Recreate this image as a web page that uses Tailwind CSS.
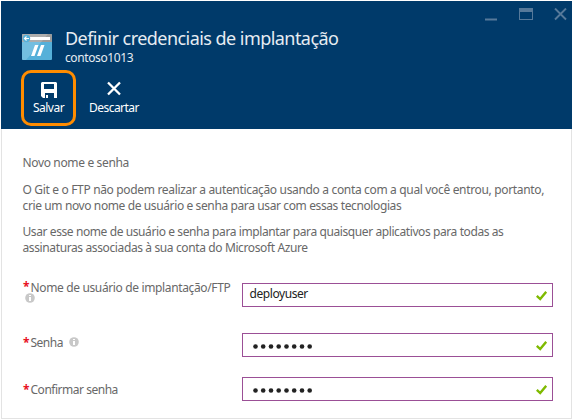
<!DOCTYPE html>
<html lang="pt-BR">
<head>
<meta charset="utf-8">
<title>Definir credenciais de implantação</title>
<script src="https://cdn.jsdelivr.net/npm/@tailwindcss/browser@4"></script>
</head>
<body class="bg-white font-['Noto_Sans',sans-serif] text-[12px] leading-4 text-[#686868] overflow-hidden">
<main class="mt-px ml-px w-[571px] h-[418px] border-r border-b border-[#e3e3e3] border-l flex flex-col">
  <header class="relative -mx-px h-32 shrink-0 bg-[#003a6a] text-[#e6ecf2]">
    <nav class="absolute right-[5px] top-[7px] flex">
      <svg class="w-[82px] h-[13px]" viewBox="0 0 82 13" fill="#56799a">
        <path d="M0 10.500h12v2H0z"/>
        <path d="M34 0h14v12H34zM35 4v7h12V4z" fill-rule="evenodd"/>
        <path d="M70 .5l11 11M81 .5l-11 11" stroke="#56799a" stroke-width="1.900"/>
      </svg>
    </nav>
    <div class="flex pt-[25px] pl-[21px]">
      <svg class="mt-[8px] w-[30px] h-[26px] shrink-0" viewBox="0 0 30 26">
        <rect width="30" height="26" rx="1" fill="#55b0d9"/>
        <path d="M0 8V1q0-1 1-1h28q1 0 1 1v7z" fill="#9b9b9b"/>
        <path d="M0 26V1q0-1 1-1h25L4 26z" fill="#fff" fill-opacity=".18"/>
        <rect x="8" y="3" width="20" height="3" fill="#fff"/>
        <circle cx="4.500" cy="4.500" r="3.700" fill="#55b0d9"/>
        <path d="M7 4.500H2.500M4.500 2.500l-2 2 2 2" stroke="#fff" stroke-width="1.100" fill="none"/>
        <path d="M13 11h3.500l-4 11H9zM19 11h3.500l-4 11H15z" fill="#fff"/>
      </svg>
      <div class="ml-[13px]">
        <h1 class="text-[18px] leading-6 whitespace-nowrap font-normal tracking-[-0.550px]">Definir credenciais de implantação</h1>
        <p class="text-[12px] leading-4 tracking-[-0.400px]">contoso1013</p>
      </div>
    </div>
    <div class="flex mt-[4px] pl-[20px] text-white">
      <button class="w-[55px] h-14 border-3 border-[#ff8c00] rounded-[10px] flex flex-col items-center pt-[9px]">
        <svg class="w-4 h-4 shrink-0" viewBox="0 0 16 16" fill="#fff" fill-rule="evenodd"><path d="M1 0h14l1 1v15h-3v-5H4v5H2l-2-2V1zM3 2v5h10V2zM5 13h2v3H5z"/></svg>
        <span class="mt-[2px] leading-4 tracking-[-0.500px]">Salvar</span>
      </button>
      <button class="ml-[9px] w-[58px] h-14 flex flex-col items-center pt-[11px]">
        <svg class="w-4 h-4 shrink-0" viewBox="0 0 16 16" fill="none" stroke="#fff" stroke-width="2.300"><path d="M2 1.500l12 12M14 1.500l-12 12"/></svg>
        <span class="mt-[3px] leading-4 tracking-[-0.550px]">Descartar</span>
      </button>
    </div>
  </header>
  <section class="pl-[20.500px] pt-[26px] whitespace-nowrap">
    <p class="tracking-[-0.350px]">Novo nome e senha</p>
    <p class="mt-[11px] tracking-[-0.335px]">O Git e o FTP não podem realizar a autenticação usando a conta com a qual você entrou, portanto,<br><span class="tracking-[-0.385px]">crie um novo nome de usuário e senha para usar com essas tecnologias</span></p>
    <p class="mt-[10px] tracking-[-0.405px]">Usar esse nome de usuário e senha para implantar para quaisquer aplicativos para todas as<br><span class="tracking-[-0.380px]">assinaturas associadas à sua conta do Microsoft Azure</span></p>
  </section>
  <form class="pl-[21px] mt-[27px] whitespace-nowrap">
    <div class="flex h-[50px]">
      <div class="w-[219px] shrink-0 -mt-[2px]">
        <div class="flex tracking-[-0.360px] h-[13px] -mt-px"><span class="w-[7.500px] -mt-px text-[#e81123] font-bold">*</span>Nome de usuário de implantação/FTP</div>
        <svg class="ml-[2px] w-[10px] h-[10px]" viewBox="0 0 10 10"><circle cx="5" cy="5" r="4.800" fill="#c8c8c8"/><path d="M4 2h2v1H4zM4 4h2v4H4z" fill="#fff"/></svg>
      </div>
      <div class="w-[311px] h-6 border border-[#9b4f96] flex justify-between pl-[6.500px] pr-[5px] text-[#222]">
        <span class="mt-[2px] tracking-[-0.430px]">deployuser</span>
        <svg class="mt-[7px] w-[11px] h-[10px]" viewBox="0 0 11 10" fill="none" stroke="#7fba00" stroke-width="2.400"><path d="M.8 4.800l3.400 3.200L10.200.8"/></svg>
      </div>
    </div>
    <div class="flex h-[44px]">
      <div class="w-[219px] shrink-0 flex tracking-[-0.500px] pt-[2px]"><span class="w-[7.500px] text-[#e81123] font-bold">*</span>Senha
        <svg class="ml-[6px] mt-[2px] w-[10px] h-[10px]" viewBox="0 0 10 10"><circle cx="5" cy="5" r="4.800" fill="#c8c8c8"/><path d="M4 2h2v1H4zM4 4h2v4H4z" fill="#fff"/></svg>
      </div>
      <div class="w-[311px] h-6 border border-[#9b4f96] flex justify-between pl-[10px] pr-[5px]">
        <svg class="mt-[10px] w-[60px] h-[5px]" viewBox="0 0 60 5" fill="#222"><circle cx="2.500" cy="2.500" r="2.300"/><circle cx="10.200" cy="2.500" r="2.300"/><circle cx="18" cy="2.500" r="2.300"/><circle cx="25.700" cy="2.500" r="2.300"/><circle cx="33.500" cy="2.500" r="2.300"/><circle cx="41.200" cy="2.500" r="2.300"/><circle cx="49" cy="2.500" r="2.300"/><circle cx="56.700" cy="2.500" r="2.300"/></svg>
        <svg class="mt-[7px] w-[11px] h-[10px]" viewBox="0 0 11 10" fill="none" stroke="#7fba00" stroke-width="2.400"><path d="M.8 4.800l3.400 3.200L10.200.8"/></svg>
      </div>
    </div>
    <div class="flex">
      <div class="w-[219px] shrink-0 flex tracking-[-0.480px] pt-[5px]"><span class="w-[7.500px] text-[#e81123] font-bold">*</span>Confirmar senha</div>
      <div class="w-[311px] h-6 border border-[#9b4f96] flex justify-between pl-[10px] pr-[5px]">
        <svg class="mt-[10px] w-[60px] h-[5px]" viewBox="0 0 60 5" fill="#222"><circle cx="2.500" cy="2.500" r="2.300"/><circle cx="10.200" cy="2.500" r="2.300"/><circle cx="18" cy="2.500" r="2.300"/><circle cx="25.700" cy="2.500" r="2.300"/><circle cx="33.500" cy="2.500" r="2.300"/><circle cx="41.200" cy="2.500" r="2.300"/><circle cx="49" cy="2.500" r="2.300"/><circle cx="56.700" cy="2.500" r="2.300"/></svg>
        <svg class="mt-[7px] w-[11px] h-[10px]" viewBox="0 0 11 10" fill="none" stroke="#7fba00" stroke-width="2.400"><path d="M.8 4.800l3.400 3.200L10.200.8"/></svg>
      </div>
    </div>
  </form>
</main>
</body>
</html>
